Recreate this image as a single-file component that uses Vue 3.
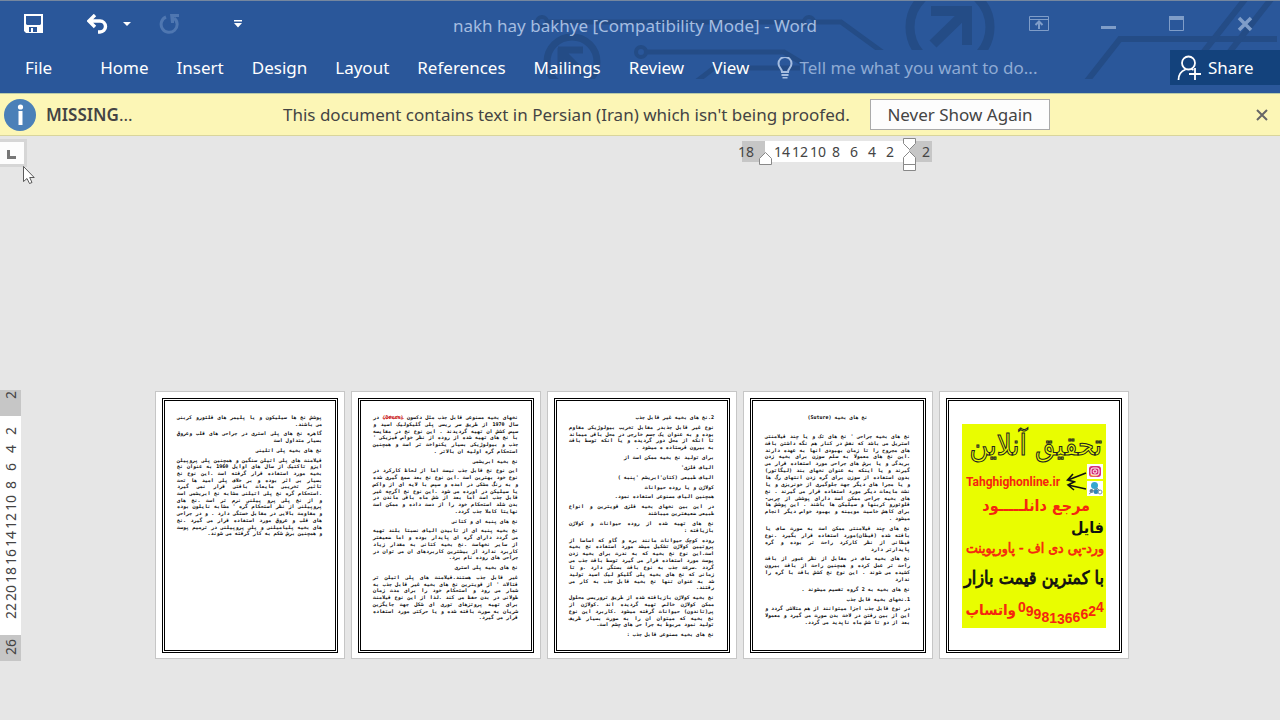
<script setup>
const tabs = ['Home', 'Insert', 'Design', 'Layout', 'References', 'Mailings', 'Review', 'View']

const across = ['18', '', '14', '12', '10', '8', '6', '4', '2', '', '2']
const down = ['2', '', '2', '4', '6', '8', '10', '12', '14', '16', '18', '20', '22', '', '26']

const pages = [
  {
    name: 'p1',
    blocks: [
      ['پوشش نخ ها سیلیکون و یا پلیمر های فلئورو کربنی', 'می باشند.'],
      ['گاهره نخ های پلی استری در جراحی های قلب وعروق', 'بسیار متداول است'],
      ['نخ های بخیه پلی اتلینی'],
      [
        'فیلامنت های پلی اتیلن سنگین و همچنین پلی پروپیلن',
        'ایزو تاکتیک از سال های اوایل 1960 به عنوان نخ',
        'بخیه مورد استفاده قرار گرفته است .این نوع نخ',
        'بسیار بی اثر بوده و بر خلاف پلی امید ها تحت',
        'تاثیر تخریبی مایعات بافتی قرار نمی گیرد',
        '.استحکام گره نخ پلی اتیلنی مشابه نخ ابریشمی است',
        'و از نخ پلی پرو پیلنی نرم تر است .نخ های',
        "پروپیلنی از نظر استحکام گره ' مشابه نایلون بوده",
        'و مقاومت بالایی در مقابل خستگی دارد . و در جراحی',
        'های قلب و عروق مورد استفاده قرار می گیرد .نخ',
        'های بخیه پلیامیلنی و پلی پروپیلنی در ترمیم پوست',
        'و همچنین برش شکم به کار گرفته می شوند.'
      ]
    ]
  },
  {
    name: 'p2',
    blocks: [
      [
        'نخهای بخیه مصنوعی قابل جذب مثل دکسون (Dexon) در',
        'سال 1970 از طریق سر ریسی پلی گلیکولیک اسید و',
        'سپس کشش ان تهیه گردیدند . این نوع نخ در مقایسه',
        "با نخ های تهیه شده از روده از نظر خواص فیزیکی '",
        'جذب و بیولوژیکی بسیار یکنواخت تر است و همچنین',
        'استحکام گره اولیه ان بالاتر .'
      ],
      ['نخ بخیه ابریشمی'],
      [
        'این نوع نخ قابل جذب نیست اما از لحاظ کارکرد در',
        'نوع خود بهترین است .این نوع نخ بعد صمغ گیری شده',
        'و به رنگ مشکی در امده و سپس با لایه ای از واکس',
        'یا سیلیکن در اورده می شود .این نوع نخ اگرچه غیر',
        'قابل جذب است اما بعد از شش ماه باقی ماندن در',
        'بدن شلد استحکام خود را از دست داده و ممکن است',
        'نهایتا کاملا جذب گردد.'
      ],
      ['نخ های پنبه ای و کتانی'],
      [
        'نخ بخیه پنبه ای از تابیدن الیاف نسبتا بلند تهیه',
        'می گردد دارای گره ای پایدار بوده و اما ضعیفتر',
        'از سایر نخهاست .نخ بخیه کتانی به مقدار زیاد',
        'کاربرد ندارد از بیشترین کاربردهای ان می توان در',
        'جراحی های روده نام برد.'
      ],
      ['نخ های بخیه پلی استری'],
      [
        'غیر قابل جذب هستند.فیلامنت های پلی اتیلن تر',
        "فتالات ' از قویترین نخ های بخیه غیر قابل جذب به",
        'شمار می رود و استحکام خود را برای مدت زمان',
        'طولانی در بدن حفظ می کند .لذا از این نوع فیلامنت',
        'برای تهیه پروتزهای توری ای شکل جهت جایگزین',
        'شریان به صورت بافته شده و یا حرکتی مورد استفاده',
        'قرار می گیرد.'
      ]
    ]
  },
  {
    name: 'p3',
    blocks: [
      ['2.نخ های بخیه غیر قابل جذب'],
      [
        'نوع غیر قابل جذبدر مقابل تخریب بیولوژیکی مقاوم',
        'بوده و به عنوان یک جسم خارجی در محل باقی میماند',
        'تا انکه از محل دور گردیده و یا انکه توسط بافت',
        'به بیرون فرستاده ه میشود .'
      ],
      ['برای تولید نخ بخیه ممکن است از'],
      ["الیاف فلزی'"],
      ["الیاف طبیعی (کتان'ابریشم 'پنبه )"],
      ['کولاژن و یا روده حیوانات'],
      ['همچنین الیاف مصنوعی استفاده نمود.'],
      ['در این بین نخهای بخیه فلزی قویترین و انواع', 'طبیعی ضعیفترین میباشند'],
      ['نخ های تهیه شده از روده حیوانات و کولاژن', 'بازیافته :'],
      [
        'روده کوچک حیوانات مانند بره و گاو که اساسا از',
        'پروتیین کولاژن تشکیل میشد مورد استفاده نخ بخیه',
        'است.این نوع نخ بخیه که به ندرت برای بخیه زدن',
        'پوست مورد استفاده قرار می گیرد توسط بافت جذب می',
        'گردد .سرعت جذب به نوع بافت بستگی دارد .و تا',
        'زمانی که نخ های بخیه پلی گلیکو لیک اسید تولید',
        'شد به عنوان تنها نخ بخیه قابل جذب به کار می',
        'رفتند.'
      ],
      [
        'نخ بخیه کولاژن بازیافته شده از طریق تروریسی محلول',
        'ممکن کولاژن خالص تهیه گردیده اند .کولاژن از',
        'پی(تاندون) حیوانات گرفته میشود .کاربرد این نوع',
        'نخ بخیه که میتوان ان را به صورت بسیار ظریف',
        'تولید نمود مربوط به جرا حی های چشم است.'
      ],
      ['نخ های بخیه مصنوعی قابل جذب :']
    ]
  },
  {
    name: 'p4',
    blocks: [
      ['نخ های بخیه (Suture)'],
      [
        "نخ های بخیه جراحی ' نخ های تک و یا چند فیلامنتی",
        'استریل می باشد که نقش در کنار هم نگه داشتن بافت',
        'های مجروح را تا زمان بهبودی انها به عهده دارند',
        '.این نخ های معمولا به سلم سوزن برای بخیه زدن',
        'بریدگی و یا برش های جراحی مورد استفاده قرار می',
        'گیرند و یا اینکه به عنوان نخهای بند (لیگاتور)',
        'بدون استفاده از سوزن برای گره زدن انتهای رگ ها',
        'و یا مجرا های دیگر جهت جلوگیری از خونریزی و یا',
        'نشت مایعات دیگر مورد استفاده قرار می گیرند . نخ',
        'های بخیه جراحی ممکن است دارای پوششی از چربی-',
        'فلوئورو کربنها و سیلیکن ها باشند . این پوشش ها',
        'برای کاهش خاصیت مویینه و بهبود خواص دیگر انجام',
        'میشود .'
      ],
      [
        'نخ های چند فیلامنتی ممکن است به صورت صاف یا',
        'بافته شده (قیطان)مورد استفاده قرار بگیرد .نوع',
        'قیطانی از نظر کارکرد راحت تر بوده و گره',
        'پایدارتر دارد'
      ],
      [
        'نخ های بخیه صاف در مقابل از نظر عبور از بافت',
        'راحت تر عمل کرده و همچنین راحت از بافت بیرون',
        'کشیده می شوند . این نوع نخ کشش بافت با گره را',
        'ندارد'
      ],
      ['نخ های بخیه به 2 گروه تقسیم میشوند .'],
      ['1.نخهای بخیه قابل جذب'],
      [
        'در نوع قابل جذب اجزا میتوانند از هم متلاشی گردد و',
        'این از بین رفتن در لاخت بدن صورت می گیرد و معمولا',
        'بعد از دو تا شش ماه ناپدید می گردد.'
      ]
    ]
  }
]

const split = (line) => line.split(/(\(Dexon\))/)
</script>

<template>
  <div class="app">
    <header class="ribbon">
      <svg class="circuit" viewBox="430 0 850 93" width="850" height="93" aria-hidden="true">
        <defs>
          <clipPath id="upper"><rect x="430" y="1" width="850" height="49" /></clipPath>
          <clipPath id="lower"><rect x="430" y="1" width="850" height="78" /></clipPath>
        </defs>
        <g fill="none" stroke="#244c86" stroke-width="5" clip-path="url(#lower)">
          <circle cx="572" cy="62" r="25" stroke-width="7" />
          <path d="M558 50h25M561 48v24M562 52l22 22" stroke-width="7" />
          <circle cx="542" cy="22" r="5" stroke-width="4" />
          <path d="M548 22h255" />
          <circle cx="809" cy="22" r="5" stroke-width="4" />
          <circle cx="641" cy="52" r="5" stroke-width="4" />
          <path d="M647 52h137l18 11" />
          <path d="M697 81l17-13h86" />
          <path d="M1087 81l33-42h157" stroke-width="6" />
        </g>
        <g fill="none" stroke="#244c86" clip-path="url(#upper)">
          <path d="M815 22h26l44 32" stroke-width="5" />
          <circle cx="950" cy="27" r="40" stroke-width="9" />
          <path d="M931 11h37M967 6v39M966 12l-33 32" stroke-width="10" />
          <path d="M1202 54l44-56M1228 54l44-56" stroke-width="6" />
        </g>
      </svg>

      <div class="titlebar">
        <div class="quick">
          <button class="tool" aria-label="Save">
            <svg width="20" height="20" viewBox="0 0 20 20"><path fill="#fff" fill-rule="evenodd" d="M0 0h19v19H2l-2-2zM2 2v8l1 1h13l1-1V2zM5 13v5h2v-4h2v4h4v-5z" /></svg>
          </button>
          <button class="tool undo" aria-label="Undo">
            <svg width="22" height="20" viewBox="0 0 22 20"><path d="M8 1L2 7l6 6M3 7h10a5.500 5.500 0 0 1 0 11h-2" fill="none" stroke="#fff" stroke-width="3.400" /></svg>
          </button>
          <button class="tool more" aria-label="Undo list">
            <svg width="8" height="5" viewBox="0 0 8 5"><path d="M0 0h8L4 4z" fill="#fff" /></svg>
          </button>
          <button class="tool redo" aria-label="Repeat">
            <svg width="21" height="20" viewBox="0 0 21 20"><path d="M7 3a8 8 0 1 0 8 1" fill="none" stroke="#4f77b1" stroke-width="3" /><path d="M11 0h9v3h-5v6h-3z" fill="#4f77b1" /></svg>
          </button>
          <button class="tool custom" aria-label="Customize toolbar">
            <svg width="8" height="8" viewBox="0 0 8 8"><path d="M0 0h8v1.500H0zM0 3h8L4 7.500z" fill="#fff" /></svg>
          </button>
        </div>
        <h1>nakh hay bakhye [Compatibility Mode] - Word</h1>
        <div class="window">
          <button class="tool" aria-label="Ribbon display options">
            <svg width="20" height="16" viewBox="0 0 20 16"><path d="M.5.500h19v14H.5zM.5 3.500h19" fill="none" stroke="#7f9dc8" /><path d="M10 13V6M6.500 9L10 5.500 13.500 9" fill="none" stroke="#7f9dc8" stroke-width="2" /></svg>
          </button>
          <button class="tool" aria-label="Minimize">
            <svg width="16" height="16" viewBox="0 0 16 16"><path d="M0 10h15v3H0z" fill="#7f9dc8" /></svg>
          </button>
          <button class="tool" aria-label="Maximize">
            <svg width="16" height="16" viewBox="0 0 16 16"><path d="M.5.500h14v14H.5z" fill="none" stroke="#7f9dc8" /><path d="M0 0h15v4H0z" fill="#7f9dc8" /></svg>
          </button>
          <button class="tool" aria-label="Close">
            <svg width="16" height="16" viewBox="0 0 16 16"><path d="M2 2l12 12M14 2L2 14" stroke="#7f9dc8" stroke-width="3.500" /></svg>
          </button>
        </div>
      </div>

      <nav class="tabs">
        <button class="tab file">File</button>
        <button v-for="tab in tabs" :key="tab" class="tab">{{ tab }}</button>
        <label class="tell">
          <svg width="16" height="22" viewBox="0 0 16 22"><path d="M5 15c0-4-3.500-4-3.500-8.500a6.500 6.500 0 0 1 13 0C14.500 11 11 11 11 15z" fill="none" stroke="#a5bde0" stroke-width="2" /><path d="M4.500 17h7v2h-7zM5.500 20h5v1.500h-5z" fill="#a5bde0" /></svg>
          <input type="text" placeholder="Tell me what you want to do..." aria-label="Tell me what you want to do" />
        </label>
        <button class="share">
          <svg width="24" height="26" viewBox="0 0 24 26"><g fill="none" stroke="#fff" stroke-width="1.800"><circle cx="11.500" cy="8" r="6.500" /><path d="M1.500 25c0-6 3-9 7-10.500M14.500 14l2 1M12 19h12M18 13v12" /></g></svg>
          Share
        </button>
      </nav>
    </header>

    <section class="notice">
      <svg class="info" width="32" height="32" viewBox="0 0 32 32" aria-hidden="true"><circle cx="16" cy="16" r="16" fill="#4b80b8" /><circle cx="16.500" cy="8" r="2.600" fill="#fff" /><path d="M14.500 12h4v14h-4z" fill="#fff" /></svg>
      <strong>MISSING<span>...</span></strong>
      <p>This document contains text in Persian (Iran) which isn't being proofed.</p>
      <button class="never">Never Show Again</button>
      <button class="tool dismiss" aria-label="Dismiss">
        <svg width="12" height="12" viewBox="0 0 12 12"><path d="M1 1l10 10M11 1L1 11" stroke="#666" stroke-width="2" /></svg>
      </button>
    </section>

    <main class="workspace">
      <div class="rulerbar">
        <button class="tabstop" aria-label="Tab stop">
          <svg width="10" height="9" viewBox="0 0 10 9"><path d="M0 0h3v6h6v3H0z" fill="#777" /></svg>
        </button>
        <div class="across">
          <span v-for="(n, i) in across" :key="i">{{ n }}</span>
          <svg class="marks" width="160" height="34" viewBox="0 0 160 34" aria-hidden="true">
            <g fill="#fff" stroke="#888"><path d="M1.500 27.500v-6l6-6 6 6v6z" /><path d="M145.500 1.500h12v5l-6 6-6-6zM145.500 27.500v-7l6-6 6 6v7zM145.500 27.500h12v6h-12z" /></g>
          </svg>
        </div>
        <svg class="cursor" width="14" height="20" viewBox="0 0 14 20" aria-hidden="true"><path d="M.5.500v15l3.500-3 2.500 5 2.500-1-2.300-5h4.500z" fill="#fff" stroke="#333" stroke-width=".8" /></svg>
      </div>

      <div class="canvas">
        <div class="down"><span v-for="(n, i) in down" :key="i">{{ n }}</span></div>
        <div class="pages">
          <article v-for="page in pages" :key="page.name" class="page">
            <div class="frame">
              <div class="body" :class="page.name" dir="rtl" lang="fa">
                <div v-for="(block, b) in page.blocks" :key="b" class="block" :style="{ flexGrow: block.length }">
                  <p v-for="(line, l) in block" :key="l" :class="{ full: l < block.length - 1 }"><template v-for="(part, k) in split(line)" :key="k"><em v-if="part === '(Dexon)'">{{ part }}</em><template v-else>{{ part }}</template></template></p>
                </div>
              </div>
            </div>
          </article>

          <article class="page">
            <div class="frame">
              <svg class="poster" width="144" height="204" viewBox="0 0 144 204" lang="fa">
                <rect width="144" height="204" fill="#e9fd00" />
                <text class="rtl head" x="140" y="31">تحقیق آنلاین</text>
                <text class="site" x="4" y="62">Tahghighonline.ir</text>
                <g fill="none" stroke="#111" stroke-width="1.600"><path d="M124 49L106 56M111 50l-5.500 6 8 2M124 65l-18-4M112 58l-6 3 6 5" /></g>
                <rect x="125" y="40" width="16" height="15" fill="#fff" />
                <rect x="127" y="42" width="12" height="11" rx="3" fill="#d62f78" />
                <path d="M128 50l9 1.500-3 1h-5z" fill="#f99a3c" />
                <rect x="129" y="44" width="8" height="7" rx="2" fill="none" stroke="#fff" />
                <circle cx="133" cy="47.500" r="1.700" fill="none" stroke="#fff" />
                <rect x="125" y="57" width="16" height="15" fill="#fff" />
                <circle cx="132.500" cy="61.500" r="3.500" fill="#35a8cf" />
                <circle cx="129.500" cy="67" r="2" fill="#5a7d95" />
                <circle cx="134" cy="67.500" r="2.500" fill="#2d88b8" />
                <circle cx="138" cy="68" r="2" fill="none" stroke="#7795a8" />
                <path d="M127 70l8-6 3 3" fill="none" stroke="#6e8fa5" />
                <text class="rtl red ref" x="128" y="87">مرجع دانلـــــود</text>
                <text class="rtl ink kind" x="142" y="109">فایل</text>
                <text class="rtl red list" x="142" y="129">ورد-پی دی اف - پاورپوینت</text>
                <text class="rtl ink price" x="142" y="160">با کمترین قیمت بازار</text>
                <text class="rtl red app-name" x="54" y="191">واتساپ</text>
                <text class="red phone" x="56" y="188">0<tspan y="192">9</tspan><tspan y="195">9</tspan><tspan y="198">8</tspan><tspan y="199">1</tspan><tspan y="200">3</tspan><tspan y="199">6</tspan><tspan y="198">6</tspan><tspan y="195">6</tspan><tspan y="192">2</tspan><tspan y="188">4</tspan></text>
              </svg>
            </div>
          </article>
        </div>
      </div>
    </main>
  </div>
</template>

<style>
body {
  margin: 0;
  background: #e6e6e6;
}
</style>

<style scoped>
.app {
  min-height: 100vh;
  display: flex;
  flex-direction: column;
  font-family: "Noto Sans", "Open Sans", sans-serif;
  font-size: 17px;
  color: #444;
  background: #e6e6e6;
  overflow: hidden;
}
button {
  font: inherit;
  color: inherit;
  border: 0;
  padding: 0;
  background: none;
  white-space: nowrap;
}
svg {
  display: block;
  flex: none;
}
.ribbon {
  position: relative;
  height: 92px;
  border-top: 1px solid #75879f;
  background: #2a579a;
  color: #fff;
}
.circuit {
  position: absolute;
  right: 0;
  top: -1px;
}
.titlebar {
  position: relative;
  height: 46px;
  display: grid;
  grid-template-columns: 453px 1fr auto;
  align-items: center;
}
.quick {
  display: flex;
  align-items: center;
  padding-left: 24px;
}
.undo {
  margin-left: 43px;
}
.more {
  margin-left: 14px;
}
.redo {
  margin-left: 28px;
}
.custom {
  margin-left: 54px;
}
h1 {
  margin: 0;
  padding-top: 4px;
  font-size: 17px;
  font-weight: 400;
  line-height: 24px;
  color: #a5bde0;
}
.window {
  display: flex;
  align-items: center;
  gap: 52px;
  padding-right: 27px;
}
.tabs {
  position: relative;
  display: flex;
  align-items: center;
  gap: 28px;
  height: 41px;
  padding-left: 25px;
}
.file {
  margin-right: 20px;
}
.tell {
  flex: 1;
  display: flex;
  align-items: center;
  gap: 6px;
}
.tell input {
  flex: 1;
  min-width: 0;
  border: 0;
  padding: 0;
  font: inherit;
  color: #a5bde0;
  background: none;
}
.tell input::placeholder {
  color: #8fabd4;
  opacity: 1;
}
.share {
  display: flex;
  align-items: center;
  gap: 7px;
  width: 110px;
  height: 35px;
  padding-left: 7px;
  background: #13427c;
}
.notice {
  display: flex;
  align-items: center;
  height: 41px;
  padding: 0 12px 0 4px;
  border-top: 1px solid #b9cba8;
  border-bottom: 1px solid #d9d59c;
  background: #fcf6b6;
}
.notice strong {
  width: 237px;
  margin-left: 10px;
  font-weight: 600;
}
.notice strong span {
  font-weight: 400;
}
.notice p {
  width: 562px;
  margin: 0;
  white-space: nowrap;
}
.never {
  height: 31px;
  width: 180px;
  margin-left: 25px;
  border: 1px solid #aaa;
  background: #fdfdfd;
}
.dismiss {
  margin-left: auto;
}
.workspace {
  flex: 1;
}
.rulerbar {
  position: relative;
  display: flex;
  align-items: flex-start;
  height: 251px;
  padding-top: 4px;
}
.tabstop {
  display: flex;
  align-items: center;
  width: 27px;
  height: 28px;
  margin-top: -1px;
  padding: 3px 0 0 7px;
  border: 3px solid #d6d6d6;
  border-left: 0;
  background: #fdfdfd;
}
.across {
  position: relative;
  display: grid;
  grid-template-columns: repeat(11, 18px);
  margin: 1px 0 0 710px;
  height: 21px;
  font-size: 14px;
  line-height: 22px;
  text-align: center;
  background: linear-gradient(90deg, transparent 5px, #c6c6c6 5px, #c6c6c6 28px, #fff 28px, #fff 172px, #c6c6c6 172px, #c6c6c6 195px, transparent 195px);
}
.across span {
  display: flex;
  justify-content: center;
}
.marks {
  position: absolute;
  left: 21px;
  top: -4px;
}
.cursor {
  position: absolute;
  left: 23px;
  top: 30px;
}
.canvas {
  display: flex;
  align-items: flex-start;
}
.down {
  display: flex;
  flex-direction: column;
  width: 21px;
  height: 271px;
  font-size: 14px;
  line-height: 21px;
  margin-top: -1px;
  background: linear-gradient(#c6c6c6 26px, #fff 26px, #fff 245px, #c6c6c6 245px);
}
.down span {
  display: flex;
  justify-content: center;
  height: 18px;
  width: 21px;
  writing-mode: vertical-rl;
  rotate: 180deg;
  text-align: center;
}
.down span:first-child {
  margin-top: -4px;
}
.pages {
  display: flex;
  gap: 6px;
  padding-left: 134px;
}
.page {
  box-sizing: border-box;
  display: flex;
  width: 190px;
  height: 268px;
  padding: 6px 6px 5px;
  border: 1px solid #c6c6c6;
  background: #fff;
}
.frame {
  flex: 1;
  min-width: 0;
  border: 3px double #000;
}
.body {
  display: flex;
  flex-direction: column;
  gap: 3px;
  margin: 13px 13px 0 12px;
  font-family: "DejaVu Sans Mono", monospace;
  font-weight: 700;
  font-size: 5px;
  line-height: 6px;
  color: #000;
}
.p1 {
  height: 123px;
}
.p2 {
  height: 207px;
}
.p3 {
  height: 224px;
}
.p4 {
  height: 212px;
}
.block {
  flex: 1 1 0;
  display: flex;
  flex-direction: column;
}
.p4 .block:first-child {
  margin-bottom: 9px;
  text-align: center;
}
.body p {
  flex: 1 1 0;
  margin: 0;
  white-space: nowrap;
}
.body .full {
  text-align: justify;
  text-align-last: justify;
}
.body em {
  font-style: normal;
  color: #c00000;
  text-decoration: line-through wavy #d03030 1px;
}
.poster {
  margin: 23px 0 0 13px;
  font-family: "DejaVu Sans Condensed", "DejaVu Sans", sans-serif;
  font-weight: 700;
}
.rtl {
  direction: rtl;
}
.red {
  fill: #f5260f;
}
.ink {
  fill: #111;
}
.head {
  font-size: 29px;
  font-weight: 400;
  fill: #e9fd00;
  stroke: #222;
  stroke-width: 1px;
}
.site {
  font-family: Roboto, "Open Sans", sans-serif;
  font-size: 12px;
  fill: #f5260f;
}
.ref {
  font-size: 16px;
}
.kind {
  font-size: 16px;
}
.list {
  font-size: 14px;
  font-weight: 400;
  stroke: #f5260f;
  stroke-width: 0.6px;
}
.price {
  font-size: 18px;
  font-weight: 400;
  stroke: #111;
  stroke-width: 0.8px;
}
.app-name {
  font-size: 15px;
}
.phone {
  font-family: "Liberation Sans", sans-serif;
  font-size: 14px;
}
</style>
